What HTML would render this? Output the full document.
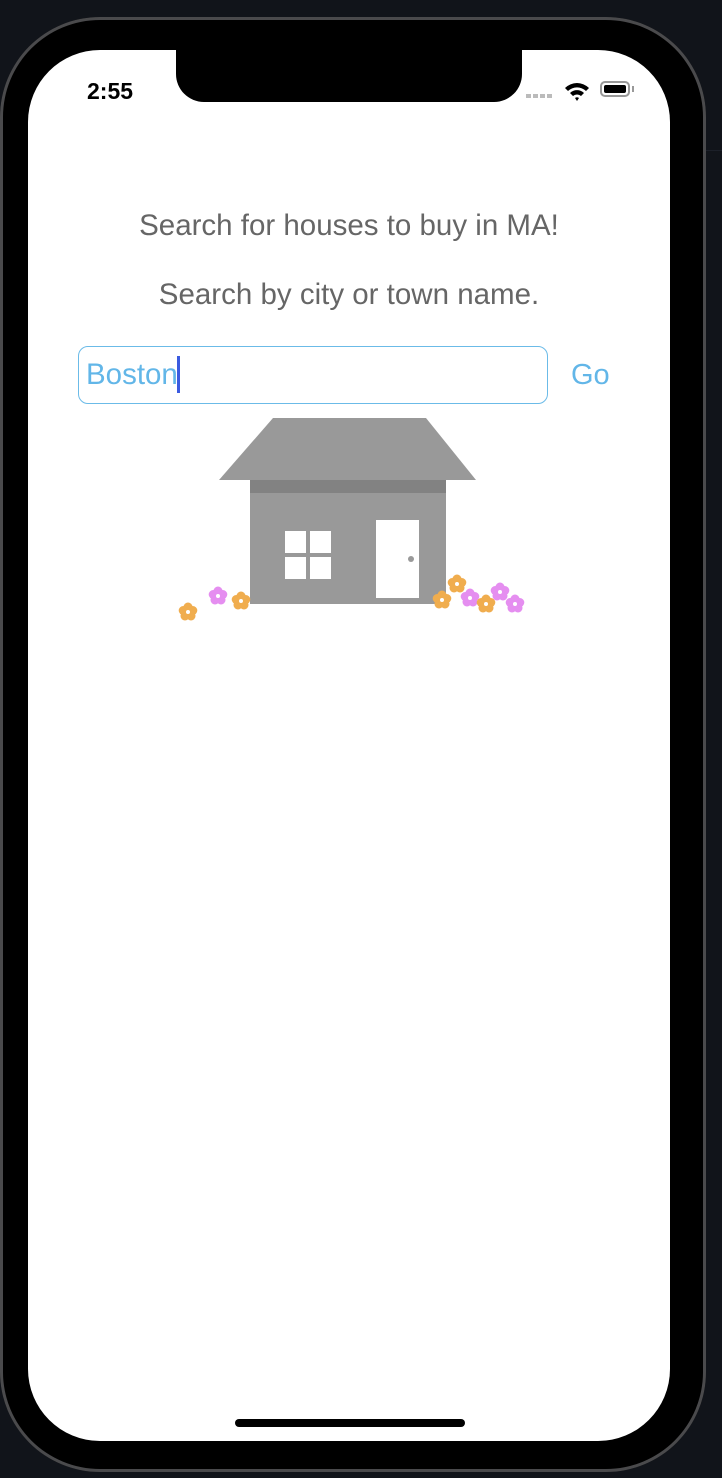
<!DOCTYPE html>
<html><head><style>
html,body{margin:0;padding:0;}
body{width:722px;height:1478px;background:#11141a;position:relative;overflow:hidden;font-family:"Liberation Sans",sans-serif;}
.phone{position:absolute;left:0;top:17px;width:706px;height:1455px;background:#000;border-radius:100px;box-shadow:inset 0 0 0 3px #4a4a4c;}
.screen{position:absolute;left:28px;top:50px;width:642px;height:1391px;background:#fff;border-radius:72px;overflow:hidden;}
.notch{position:absolute;left:176px;top:40px;width:346px;height:62px;background:#000;border-radius:0 0 28px 28px;}
.t{position:absolute;left:0;width:722px;text-align:center;color:#666;font-size:29.5px;}
</style></head><body>
<div style="position:absolute;left:0;top:150px;width:722px;height:1px;background:#1c2029"></div>
<div class="phone"></div>
<div class="screen"></div>
<div class="notch"></div>
<div style="position:absolute;left:87px;top:78px;font-size:23px;font-weight:bold;color:#000;">2:55</div>
<div style="position:absolute;left:526px;top:94px;width:27px;height:4px;background:repeating-linear-gradient(90deg,#bbb 0 5px,transparent 5px 7px);"></div>
<svg style="position:absolute;left:563px;top:80px" width="28" height="22" viewBox="0 0 28 22"><path d="M2 8 A17 17 0 0 1 26 8 L23 11 A13 13 0 0 0 5 11Z M7 13 A10 10 0 0 1 21 13 L18 16 A6 6 0 0 0 10 16Z M12 18 A3 3 0 0 1 16 18 L14 21Z" fill="#000"/></svg>
<div style="position:absolute;left:600px;top:81px;width:30px;height:16px;border:2px solid #999;border-radius:5px;box-sizing:border-box;padding:2px"><div style="background:#000;width:100%;height:100%;border-radius:2px"></div></div>
<div style="position:absolute;left:632px;top:86px;width:2px;height:6px;background:#999"></div>
<div class="t" style="top:209px;left:-12px">Search for houses to buy in MA!</div>
<div class="t" style="top:278px;left:-12px">Search by city or town name.</div>
<div style="position:absolute;left:78px;top:346px;width:470px;height:58px;border:1.5px solid #6bbbe8;border-radius:10px;box-sizing:border-box"></div>
<div style="position:absolute;left:86px;top:358px;font-size:29.5px;color:#62b6e8">Boston</div>
<div style="position:absolute;left:177px;top:356px;width:3px;height:37px;background:#3b5be0"></div>
<div style="position:absolute;left:571px;top:359px;font-size:29px;color:#62b6e8">Go</div>
<svg style="position:absolute;left:0;top:0" width="722" height="700">
<polygon points="273,418 426,418 476,480 219,480" fill="#999"/>
<rect x="250" y="480" width="196" height="124" fill="#999"/>
<rect x="250" y="480" width="196" height="13" fill="#828282"/>
<rect x="285" y="531" width="21" height="22" fill="#fff"/><rect x="310" y="531" width="21" height="22" fill="#fff"/>
<rect x="285" y="557" width="21" height="22" fill="#fff"/><rect x="310" y="557" width="21" height="22" fill="#fff"/>
<rect x="376" y="520" width="43" height="78" fill="#fff"/>
<circle cx="411" cy="559" r="3" fill="#999"/>
<defs><g id="f"><circle cx="0" cy="-5" r="4.5"/><circle cx="4.8" cy="-1.5" r="4.5"/><circle cx="3" cy="4" r="4.5"/><circle cx="-3" cy="4" r="4.5"/><circle cx="-4.8" cy="-1.5" r="4.5"/><circle cx="0" cy="0" r="4"/></g></defs>
<g fill="#f0ad4e">
<use href="#f" x="188" y="612"/><use href="#f" x="241" y="601"/><use href="#f" x="442" y="600"/><use href="#f" x="457" y="584"/>
</g>
<g fill="#e58ef0">
<use href="#f" x="218" y="596"/><use href="#f" x="470" y="598"/><use href="#f" x="500" y="592"/><use href="#f" x="515" y="604"/>
</g>
<use href="#f" x="486" y="604" fill="#f0ad4e"/>
<g fill="#fff">
<circle cx="188" cy="612" r="2"/><circle cx="241" cy="601" r="2"/><circle cx="442" cy="600" r="2"/><circle cx="457" cy="584" r="2"/>
<circle cx="218" cy="596" r="2"/><circle cx="470" cy="598" r="2"/><circle cx="500" cy="592" r="2"/><circle cx="515" cy="604" r="2"/><circle cx="486" cy="604" r="2"/>
</g>
</svg>
<div style="position:absolute;left:235px;top:1419px;width:230px;height:8px;background:#000;border-radius:4px"></div>
</body></html>
